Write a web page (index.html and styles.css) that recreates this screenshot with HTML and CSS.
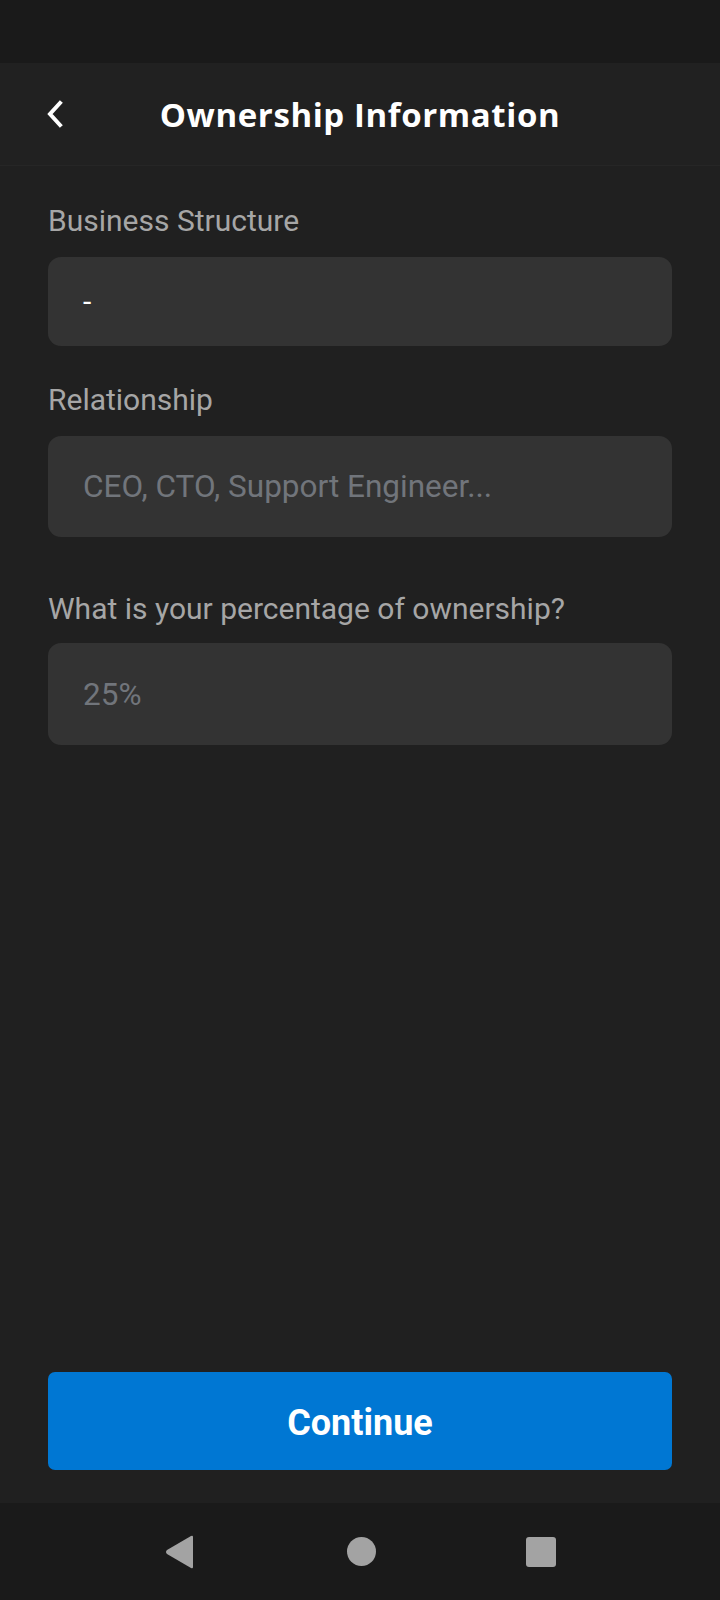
FILE: index.html
```html
<!DOCTYPE html>
<html>
<head>
<meta charset="utf-8">
<link rel="stylesheet" href="styles.css">
</head>
<body>
<div class="screen">
  <div class="status"></div>
  <header class="header">
    <button class="back" aria-label="Back">
      <svg width="20" height="28" viewBox="0 0 20 28"><path d="M15 3 L5 14 L15 25" fill="none" stroke="#ffffff" stroke-width="4" stroke-linecap="square"/></svg>
    </button>
    <h1 class="title">Ownership Information</h1>
  </header>
  <main class="content">
    <label class="label first">Business Structure</label>
    <div class="field f1"><span class="value">-</span></div>
    <label class="label second">Relationship</label>
    <div class="field f2"><span class="placeholder">CEO, CTO, Support Engineer...</span></div>
    <label class="label third">What is your percentage of ownership?</label>
    <div class="field f3"><span class="placeholder">25%</span></div>
  </main>
  <div class="footer">
    <button class="continue">Continue</button>
  </div>
  <nav class="navbar">
    <svg width="32" height="34" viewBox="0 0 32 34"><path d="M29 2 L29 32 Q29 34 27 33 L3 19 Q1 17 3 15 L27 1 Q29 0 29 2 Z" fill="#a3a3a3"/></svg>
    <span class="home"></span>
    <span class="recent"></span>
  </nav>
</div>
</body>
</html>
```
FILE: styles.css
```css
html, body {
  margin: 0;
  padding: 0;
  background: #202020;
}
.screen {
  width: 720px;
  height: 1600px;
  display: flex;
  flex-direction: column;
  background: #202020;
  font-family: Roboto, "Liberation Sans", sans-serif;
}
.status {
  height: 63px;
  background: #1a1a1a;
}
.header {
  height: 102px;
  border-bottom: 1px solid #262626;
  background: #212121;
  display: flex;
  align-items: center;
  position: relative;
}
.back {
  background: none;
  border: none;
  padding: 0;
  margin-left: 45px;
  width: 22px;
  height: 30px;
  display: flex;
  align-items: center;
  margin-top: 0;
}
.title {
  margin: 0;
  flex: 1;
  text-align: center;
  font-family: "Open Sans", "Noto Sans", sans-serif;
  font-weight: 700;
  font-size: 33px;
  color: #ffffff;
  padding-right: 67px;
  margin-top: 0;
  letter-spacing: 0.6px;
}
.content {
  flex: 1;
  display: flex;
  flex-direction: column;
  padding: 0 48px;
}
.label {
  display: block;
  font-size: 30px;
  line-height: 32px;
  color: #a6a6a6;
}
.label.first { margin-top: 39px; }
.label.second { margin-top: 38px; }
.label.third { margin-top: 56px; }
.field {
  background: #333333;
  border-radius: 13px;
  display: flex;
  align-items: center;
  padding-left: 35px;
  margin-top: 20px;
}
.f1 { height: 89px; }
.f2 { height: 101px; }
.f3 { height: 102px; margin-top: 18px; }
.value {
  color: #ffffff;
  font-size: 30px;
}
.placeholder {
  color: #71757b;
  font-size: 31.5px;
}
.footer {
  padding: 0 48px 33px;
  background: #202020;
}
.continue {
  width: 100%;
  height: 98px;
  border: none;
  border-radius: 7px;
  background: #0077d3;
  color: #ffffff;
  font-family: Roboto, "Liberation Sans", sans-serif;
  font-weight: 700;
  font-size: 36px;
  padding: 0;
  padding-top: 4px;
}
.navbar {
  height: 97px;
  background: #1a1a1a;
  display: flex;
  align-items: center;
  justify-content: center;
}
.navbar svg {
  margin-right: 151px;
}
.home {
  width: 29px;
  height: 29px;
  border-radius: 50%;
  background: #a3a3a3;
  margin-right: 150px;
}
.recent {
  width: 30px;
  height: 30px;
  border-radius: 3px;
  background: #a3a3a3;
}
```
